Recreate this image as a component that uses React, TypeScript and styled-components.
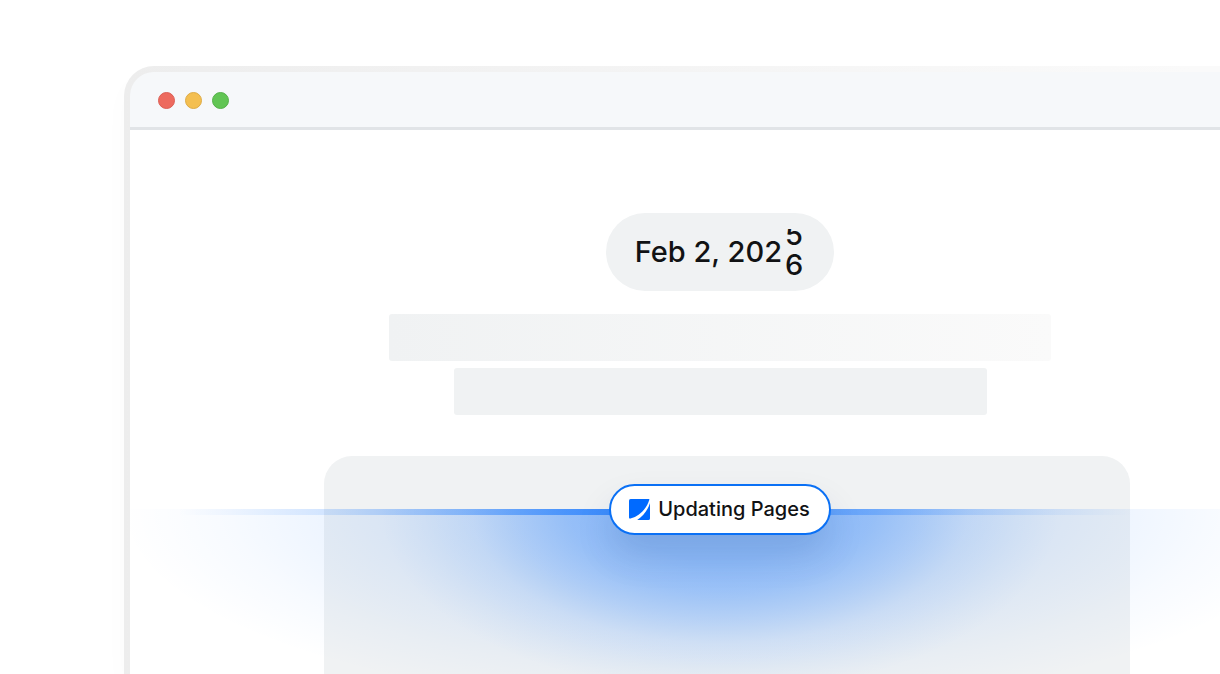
import React from "react";
import styled, { createGlobalStyle } from "styled-components";

const GlobalStyle = createGlobalStyle`
  *, *::before, *::after { box-sizing: border-box; }
  body {
    margin: 0;
    background: #ffffff;
    color: #111214;
    font-family: Inter, "Liberation Sans", sans-serif;
  }
`;

const Page = styled.main`
  display: flex;
  height: 100vh;
  padding: 66px 0 0 124px;
  overflow: hidden;
`;

const BrowserWindow = styled.section`
  display: flex;
  flex: 1 0 auto;
  flex-direction: column;
  width: calc(100% + 90px);
  padding: 6px 0 0 6px;
  border-radius: 30px 0 0 0;
  background: linear-gradient(90deg, #ededed, #f1f1f1 25%, #fafafa 90%);
  box-shadow: 0 12px 28px rgba(0, 0, 0, 0.02);
`;

const TitleBar = styled.header`
  display: flex;
  align-items: center;
  gap: 10px;
  height: 58px;
  padding: 2px 0 0 28px;
  border-bottom: 3px solid #e1e4e7;
  border-radius: 24px 0 0 0;
  background: #f6f8fa;
`;

const WindowDot = styled.span<{ $fill: string; $edge: string }>`
  width: 17px;
  height: 17px;
  border: 1px solid ${(p) => p.$edge};
  border-radius: 50%;
  background: ${(p) => p.$fill};
`;

const Viewport = styled.div`
  display: flex;
  flex: 1;
  flex-direction: column;
  align-items: center;
  padding-top: 83px;
  background: #ffffff;
`;

const DatePill = styled.div`
  display: flex;
  align-items: center;
  gap: 3px;
  height: 78px;
  margin-bottom: 23px;
  padding: 0 31px 0 29px;
  border-radius: 39px;
  background: #f0f2f3;
  font-size: 29px;
  font-weight: 500;
  line-height: 30px;
  white-space: pre;
`;

const DigitWindow = styled.span`
  height: 47px;
  overflow: hidden;
`;

const DigitStrip = styled.span`
  display: flex;
  flex-direction: column;
  margin-top: -9px;
`;

const TextBar = styled.div<{ $width: number; $fading?: boolean }>`
  width: ${(p) => p.$width}px;
  height: 47px;
  margin-bottom: 7px;
  border-radius: 3px;
  background: ${(p) =>
    p.$fading ? "linear-gradient(90deg, #f0f2f3, #fafafa)" : "#f0f2f3"};
`;

const Preview = styled.div`
  position: relative;
  display: flex;
  flex: 1;
  justify-content: center;
  width: 100%;
  margin-top: 34px;
  padding-left: 14px;
`;

const ContentCard = styled.div`
  width: 806px;
  border-radius: 28px 28px 0 0;
  background: #f0f2f3;
`;

const Scan = styled.div`
  position: absolute;
  inset: 28px 0 0;
  display: flex;
  flex-direction: column;
  align-items: center;
`;

const ScanGlow = styled.div`
  position: absolute;
  inset: 25px 0 0;
  background:
    radial-gradient(
      ellipse 340px 184px at 50% 0,
      rgba(0, 106, 255, 0.31),
      rgba(0, 106, 255, 0.3) 28%,
      rgba(0, 106, 255, 0.25) 45%,
      rgba(0, 106, 255, 0.17) 59%,
      rgba(0, 106, 255, 0.08) 73%,
      rgba(0, 106, 255, 0.03) 88%,
      rgba(0, 106, 255, 0)
    ),
    radial-gradient(
      ellipse 600px 200px at 50% 0,
      rgba(0, 106, 255, 0.2),
      rgba(0, 106, 255, 0.17) 25%,
      rgba(0, 106, 255, 0.12) 45%,
      rgba(0, 106, 255, 0.07) 65%,
      rgba(0, 106, 255, 0.03) 82%,
      rgba(0, 106, 255, 0)
    );
`;

const ScanLine = styled.div`
  position: absolute;
  inset: 25px 0 auto;
  height: 6px;
  background: linear-gradient(
    90deg,
    rgba(0, 106, 255, 0) 4%,
    rgba(0, 106, 255, 0.12) 17%,
    rgba(0, 106, 255, 0.58) 41%,
    rgba(0, 106, 255, 0.58) 50%,
    rgba(0, 106, 255, 0.3) 60%,
    rgba(0, 106, 255, 0.12) 73%,
    rgba(0, 106, 255, 0) 85%
  );
`;

const StatusBadge = styled.div`
  position: relative;
  display: flex;
  align-items: center;
  gap: 8px;
  height: 51px;
  padding: 0 19px 2px 18px;
  border: 2px solid #0a70f5;
  border-radius: 26px;
  background: #ffffff;
  box-shadow: 0 20px 36px rgba(20, 50, 90, 0.13);
  font-size: 20px;
  font-weight: 500;
  line-height: 24px;
`;

const LogoMark = styled.svg`
  margin-top: 2px;
`;

function PagesLogo() {
  return (
    <LogoMark width="21" height="21" viewBox="0 0 21 21" fill="#006aff" aria-hidden="true">
      <path d="M1.6 0H20Q20.4 0 20.4 .6C18 9 11 17 1.4 19.6Q0 19.8 0 18.6V1.6Q0 0 1.6 0Z" />
      <path d="M21 4V19.4Q21 21 19.4 21H8.2C14.2 17.2 18.6 11.4 21 4Z" />
    </LogoMark>
  );
}

export default function App() {
  return (
    <>
      <GlobalStyle />
      <Page>
        <BrowserWindow>
          <TitleBar>
            <WindowDot $fill="#ed6a5e" $edge="#dc5f55" />
            <WindowDot $fill="#f4bf50" $edge="#deab45" />
            <WindowDot $fill="#61c554" $edge="#55b149" />
          </TitleBar>
          <Viewport>
            <DatePill>
              <span>Feb 2, 202</span>
              <DigitWindow>
                <DigitStrip>
                  <span>5</span>
                  <span>6</span>
                </DigitStrip>
              </DigitWindow>
            </DatePill>
            <TextBar $width={662} $fading />
            <TextBar $width={533} />
            <Preview>
              <ContentCard />
              <Scan>
                <ScanGlow />
                <ScanLine />
                <StatusBadge role="status">
                  <PagesLogo />
                  Updating Pages
                </StatusBadge>
              </Scan>
            </Preview>
          </Viewport>
        </BrowserWindow>
      </Page>
    </>
  );
}
